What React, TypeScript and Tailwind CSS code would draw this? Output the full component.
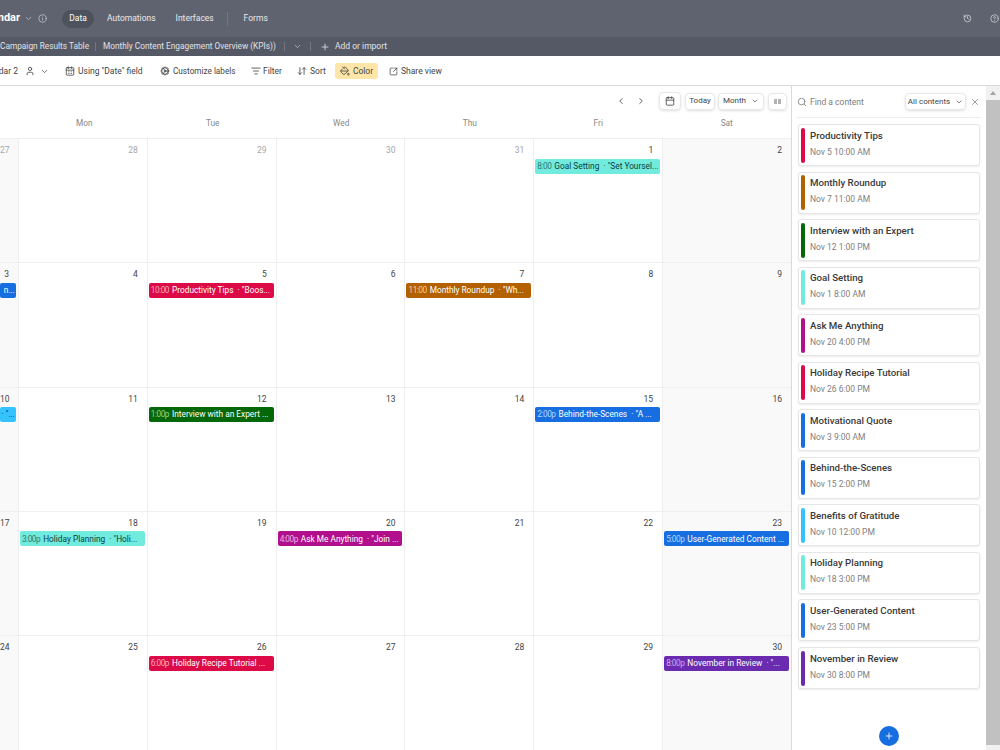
import {
  ArrowDownUp,
  Calendar,
  CalendarDays,
  ChevronDown,
  ChevronLeft,
  ChevronRight,
  CircleHelp,
  Cog,
  History,
  Info,
  ListFilter,
  PaintBucket,
  Plus,
  Search,
  SquareArrowOutUpRight,
  User,
  X,
} from "lucide-react";

type Chip = { time: string; label: string; className: string; timeClass: string };

const teal = "bg-[#72ebdf] text-[#0c3f3a]";
const red = "bg-[#dc0a47] text-white";
const brown = "bg-[#b26000] text-white";
const green = "bg-[#056808] text-white";
const blue = "bg-[#166ee1] text-white";
const sky = "bg-[#34c3ff] text-[#07354a]";
const magenta = "bg-[#b10f8c] text-white";
const purple = "bg-[#6b2bb0] text-white";

const chips: Record<string, Chip> = {
  "1": { time: "8:00", label: "Goal Setting  · \"Set Yoursel...", className: teal, timeClass: "text-[#2f7a72]" },
  "3": { time: "", label: "n...", className: blue, timeClass: "" },
  "5": { time: "10:00", label: "Productivity Tips  · \"Boos...", className: red, timeClass: "text-[#f7a9c0]" },
  "7": { time: "11:00", label: "Monthly Roundup  · \"Wh...", className: brown, timeClass: "text-[#f2cf9f]" },
  "10": { time: "", label: "· \"...", className: sky, timeClass: "" },
  "12": { time: "1:00p", label: "Interview with an Expert ...", className: green, timeClass: "text-[#8fd391]" },
  "15": { time: "2:00p", label: "Behind-the-Scenes  · \"A ...", className: blue, timeClass: "text-[#b5d3f7]" },
  "18": { time: "3:00p", label: "Holiday Planning  · \"Holi...", className: teal, timeClass: "text-[#2f7a72]" },
  "20": { time: "4:00p", label: "Ask Me Anything  · \"Join ...", className: magenta, timeClass: "text-[#eeb0e0]" },
  "23": { time: "5:00p", label: "User-Generated Content ...", className: blue, timeClass: "text-[#b5d3f7]" },
  "26": { time: "6:00p", label: "Holiday Recipe Tutorial ...", className: red, timeClass: "text-[#f7a9c0]" },
  "30": { time: "8:00p", label: "November in Review  · \"...", className: purple, timeClass: "text-[#c9a8ea]" },
};

const days = [
  ["27", "28", "29", "30", "31", "1", "2"],
  ["3", "4", "5", "6", "7", "8", "9"],
  ["10", "11", "12", "13", "14", "15", "16"],
  ["17", "18", "19", "20", "21", "22", "23"],
  ["24", "25", "26", "27", "28", "29", "30"],
];

const contents = [
  ["Productivity Tips", "Nov 5 10:00 AM", "bg-[#dc0a47]"],
  ["Monthly Roundup", "Nov 7 11:00 AM", "bg-[#b26000]"],
  ["Interview with an Expert", "Nov 12 1:00 PM", "bg-[#056808]"],
  ["Goal Setting", "Nov 1 8:00 AM", "bg-[#72ebdf]"],
  ["Ask Me Anything", "Nov 20 4:00 PM", "bg-[#b10f8c]"],
  ["Holiday Recipe Tutorial", "Nov 26 6:00 PM", "bg-[#dc0a47]"],
  ["Motivational Quote", "Nov 3 9:00 AM", "bg-[#166ee1]"],
  ["Behind-the-Scenes", "Nov 15 2:00 PM", "bg-[#166ee1]"],
  ["Benefits of Gratitude", "Nov 10 12:00 PM", "bg-[#34c3ff]"],
  ["Holiday Planning", "Nov 18 3:00 PM", "bg-[#72ebdf]"],
  ["User-Generated Content", "Nov 23 5:00 PM", "bg-[#166ee1]"],
  ["November in Review", "Nov 30 8:00 PM", "bg-[#6b2bb0]"],
];

function DayCell({ day, row, col }: { day: string; row: number; col: number }) {
  const muted = row === 0 && col < 5;
  const chip = row === 0 && col < 5 ? undefined : chips[day];
  const weekend = col === 0 || col === 6;
  return (
    <div
      className={`min-w-0 overflow-hidden border-b border-[#efefef] ${col > 0 ? "border-l" : ""} ${
        weekend ? "bg-[#f9f9f9]" : "bg-white"
      }`}
    >
      <div
        className={`h-[19.5px] pt-[5px] text-right text-[8.5px] leading-[12px] pr-[9px] ${
          muted ? "text-[#a6a6a6]" : "text-[#444]"
        }`}
      >
        {day}
      </div>
      {chip && (
        <div className={col === 0 ? "pr-[2px]" : "pl-[1px] pr-[2px]"}>
          <div
            className={`flex h-[15px] items-center overflow-hidden whitespace-pre rounded-[2px] text-[8.3px] leading-none ${
              col === 0 ? "justify-end pr-[1px]" : "pl-[2px]"
            } ${chip.className}`}
          >
            {chip.time && <span className={`mr-[3px] text-[8.3px] tracking-[-0.5px] ${chip.timeClass}`}>{chip.time}</span>}
            <span>{chip.label}</span>
          </div>
        </div>
      )}
    </div>
  );
}

export default function App() {
  return (
    <div className="flex h-[750px] w-[1000px] flex-col overflow-hidden bg-white font-['Roboto',sans-serif] text-[#333]">
      {/* top nav */}
      <div className="flex h-[37px] shrink-0 items-center bg-[#5f636f] text-[8.5px] text-[#e8e9ec]">
        <span className="flex w-[20px] justify-end whitespace-nowrap text-[11px] font-bold text-white">Calendar</span>
        <ChevronDown className="ml-[4px] size-[9px] text-[#c5c7cd]" />
        <Info className="ml-[5px] size-[9px] text-[#c5c7cd]" />
        <span className="ml-[15px] flex h-[18px] w-[32px] items-center justify-center rounded-full bg-[#4e525d] text-white">
          Data
        </span>
        <span className="ml-[13px]">Automations</span>
        <span className="ml-[20px] w-[36px] whitespace-nowrap">Interfaces</span>
        <span className="ml-[15px] h-[14px] w-px bg-[#73777f]" />
        <span className="ml-[16px]">Forms</span>
        <History className="ml-auto size-[9px] text-[#d5d6da]" />
        <CircleHelp className="ml-[18px] mr-[1px] size-[9px] text-[#d5d6da]" />
      </div>

      {/* table tabs */}
      <div className="flex h-[19px] shrink-0 items-center bg-[#555965] text-[8.3px] text-[#e0e1e5]">
        <span className="w-[87px] whitespace-nowrap">Campaign Results Table</span>
        <span className="ml-[8px] h-[9px] w-px bg-[#74777f]" />
        <span className="ml-[7px] w-[173px] whitespace-nowrap">Monthly Content Engagement Overview (KPIs))</span>
        <span className="ml-[8px] h-[9px] w-px bg-[#74777f]" />
        <ChevronDown className="ml-[8px] size-[9px] text-[#c5c7cd]" />
        <span className="ml-[8px] h-[9px] w-px bg-[#74777f]" />
        <Plus className="ml-[9px] size-[10px]" />
        <span className="ml-[5px] whitespace-nowrap text-[8.5px]">Add or import</span>
      </div>

      {/* view toolbar */}
      <div className="flex h-[30px] shrink-0 items-center border-b border-[#d9d9d9] bg-white pt-[1px] text-[8.5px] text-[#444]">
        <span className="flex w-[18px] justify-end whitespace-nowrap">Calendar 2</span>
        <User className="ml-[7px] size-[10px]" />
        <ChevronDown className="ml-[5px] size-[9px]" />
        <CalendarDays className="ml-[16px] size-[10px]" />
        <span className="ml-[3px] w-[67px] whitespace-nowrap">Using "Date" field</span>
        <Cog className="ml-[15px] size-[10px]" />
        <span className="ml-[3px] w-[62px] whitespace-nowrap text-[8.2px]">Customize labels</span>
        <ListFilter className="ml-[16px] size-[10px]" />
        <span className="ml-[2px] w-[19px]">Filter</span>
        <ArrowDownUp className="ml-[15px] size-[10px]" />
        <span className="ml-[3px] w-[16px]">Sort</span>
        <span className="ml-[9px] flex h-[16px] w-[43px] items-center justify-center gap-[3px] rounded-[3px] bg-[#ffe6a8]">
          <PaintBucket className="size-[10px]" />
          Color
        </span>
        <SquareArrowOutUpRight className="ml-[11px] size-[9px]" />
        <span className="ml-[3px] w-[39px] whitespace-nowrap">Share view</span>
      </div>

      <div className="flex min-h-0 flex-1">
        {/* calendar */}
        <div className="flex w-[791px] shrink-0 flex-col">
          <div className="flex h-[29px] shrink-0 items-center pt-[1px] text-[8px] text-[#444]">
            <ChevronLeft className="ml-[616px] size-[10px]" />
            <ChevronRight className="ml-[10px] size-[10px]" />
            <span className="ml-[13px] flex h-[18px] w-[22px] items-center justify-center rounded-[4px] border border-[#e8e8e8] shadow-sm">
              <Calendar className="size-[10px]" />
            </span>
            <span className="ml-[4px] flex h-[17px] w-[30px] items-center justify-center rounded-[4px] border border-[#e8e8e8] shadow-sm">
              Today
            </span>
            <span className="ml-[3px] flex h-[17px] w-[46px] items-center justify-center gap-[5px] rounded-[4px] border border-[#e8e8e8] shadow-sm">
              Month
              <ChevronDown className="size-[8px]" />
            </span>
            <span className="ml-[4px] flex h-[17px] w-[19px] items-center justify-center rounded-[4px] border border-[#e8e8e8] shadow-sm">
              <span className="flex h-[5px] w-[7px] gap-px">
                <span className="w-[3px] bg-[#b3b3b3]" />
                <span className="w-[3px] bg-[#b3b3b3]" />
              </span>
            </span>
          </div>
          <div className="grid h-[24px] shrink-0 grid-cols-[19px_repeat(6,1fr)] border-b border-[#efefef] pl-[1px] pt-[1px] text-center text-[8.3px] leading-[14px] text-[#888]">
            <span />
            {["Mon", "Tue", "Wed", "Thu", "Fri", "Sat"].map((d) => (
              <span key={d}>{d}</span>
            ))}
          </div>
          <div className="grid min-h-0 flex-1 grid-cols-[18px_repeat(6,1fr)] grid-rows-[repeat(5,124.3px)] overflow-hidden">
            {days.map((week, row) =>
              week.map((day, col) => <DayCell key={`${row}-${col}`} day={day} row={row} col={col} />)
            )}
          </div>
        </div>

        {/* content sidebar */}
        <div className="flex min-w-0 flex-1 border-l border-[#d9d9d9]">
          <div className="relative flex w-[194px] flex-col px-[5px]">
            <div className="flex h-[32px] shrink-0 items-center border-b border-[#ececec] text-[8.5px] text-[#808080]">
              <Search className="size-[10px]" />
              <span className="ml-[3px] pt-[2px]">Find a content</span>
              <span className="ml-auto flex h-[17px] w-[61px] items-center justify-center gap-[5px] rounded-[4px] border border-[#e8e8e8] text-[8px] text-[#444] shadow-sm">
                All contents
                <ChevronDown className="size-[8px]" />
              </span>
              <X className="ml-[4px] mr-[1px] size-[10px] text-[#888]" />
            </div>
            <div className="mt-[6px] flex flex-col gap-[5.55px] pl-px pr-[1px]">
              {contents.map(([title, when, bar]) => (
                <div
                  key={title}
                  className="flex h-[42px] items-stretch rounded-[3px] border border-[#e6e6e6] bg-white py-[2.5px] pl-[2px] shadow-[0_1px_2px_rgba(0,0,0,0.08)]"
                >
                  <span className={`w-[4px] rounded-[2px] ${bar}`} />
                  <div className="ml-[5px] flex flex-col pt-[1px]">
                    <span className="text-[9.7px] font-medium leading-[14px] text-[#3a3a3a]">{title}</span>
                    <span className="mt-[3px] text-[8.5px] leading-[12px] text-[#808080]">{when}</span>
                  </div>
                </div>
              ))}
            </div>
            <button className="absolute bottom-[4px] left-[87px] flex size-[20px] items-center justify-center rounded-full bg-[#166ee1] text-white">
              <Plus className="size-[10px]" />
            </button>
          </div>
          <div className="flex w-[14px] flex-col bg-[#f1f1f1]">
            <div className="flex h-[14px] shrink-0 items-center justify-center">
              <span className="size-0 border-x-[3px] border-b-[4px] border-x-transparent border-b-[#a3a3a3]" />
            </div>
            <div className="mb-[5px] flex-1 bg-[#c1c1c1]" />
          </div>
        </div>
      </div>
    </div>
  );
}
